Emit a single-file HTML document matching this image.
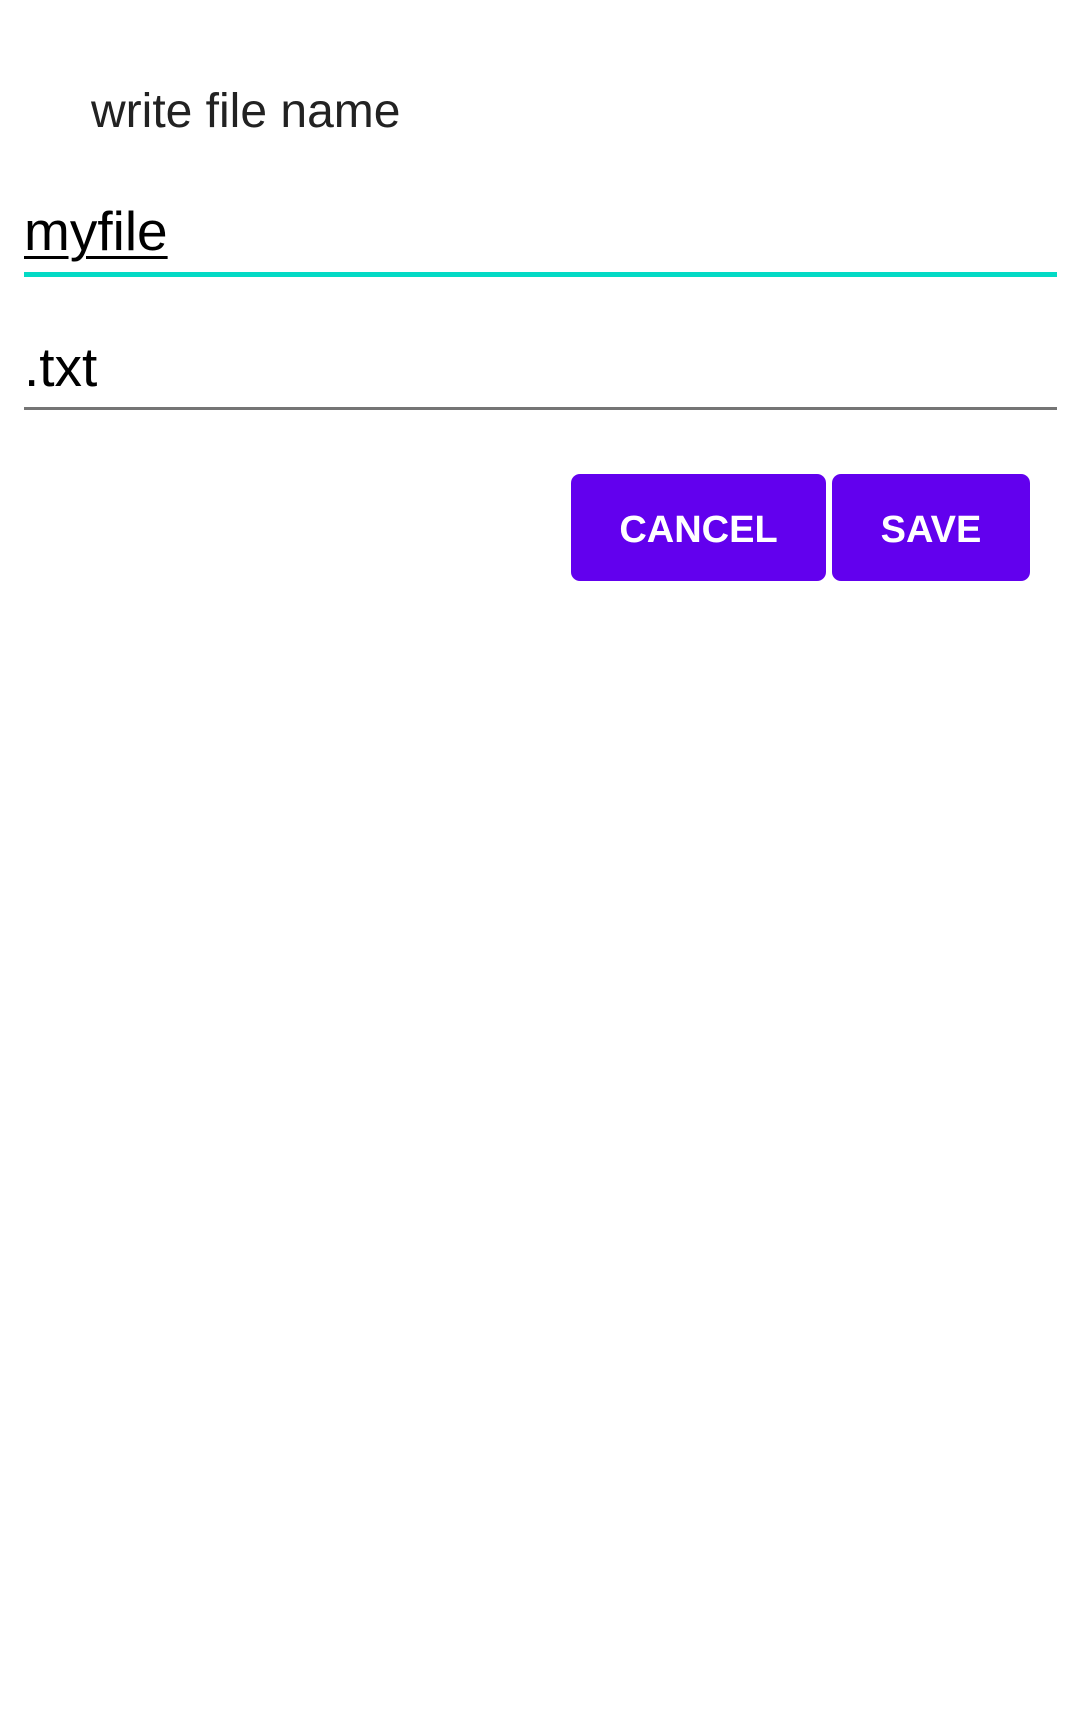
<!DOCTYPE html>
<html><head><meta charset="utf-8"><style>
html,body{margin:0;padding:0;background:#fff;width:1080px;height:1734px;overflow:hidden;font-family:"Liberation Sans",sans-serif;}
.abs{position:absolute;white-space:nowrap;}
.btn{position:absolute;background:#6200ee;border-radius:9px;color:#fff;font-weight:bold;font-size:38px;display:flex;align-items:center;justify-content:center;padding-top:5px;box-sizing:border-box;}
</style></head><body>
<div class="abs" style="left:91px;top:82px;font-size:48px;color:#222;line-height:60px;">write file name</div>
<div class="abs" style="left:24px;top:198px;font-size:55px;color:#000;line-height:66px;text-decoration:underline;text-decoration-thickness:3px;text-underline-offset:6px;">myfile</div>
<div class="abs" style="left:24px;top:272px;width:1033px;height:5px;background:#03dac5;"></div>
<div class="abs" style="left:24px;top:334px;font-size:55px;color:#000;line-height:66px;">.txt</div>
<div class="abs" style="left:24px;top:407px;width:1033px;height:3px;background:#757575;"></div>
<div class="btn" style="left:571px;top:474px;width:255px;height:107px;">CANCEL</div>
<div class="btn" style="left:832px;top:474px;width:198px;height:107px;">SAVE</div>
</body></html>
